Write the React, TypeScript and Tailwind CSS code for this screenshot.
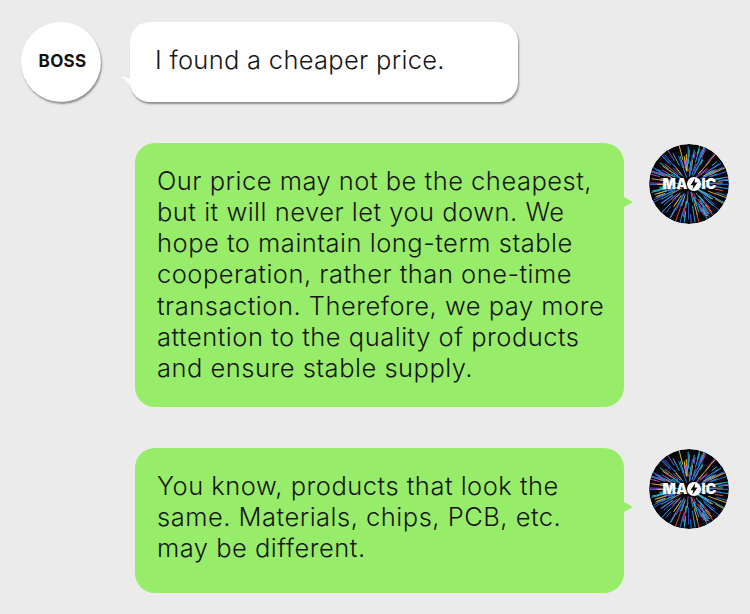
const COLORS = ['#2f7fe8', '#e0389a', '#1fb7d8', '#3a5fe0', '#f0a03a', '#2f9fe8', '#9a4be0', '#23c4c9', '#2f6fe8', '#e8553a', '#2aa8e0', '#d8c03a'];

function rnd(n: number) {
  const x = Math.sin(n * 12.9898) * 43758.5453;
  return x - Math.floor(x);
}

function Burst() {
  const lines = [];
  for (let i = 0; i < 210; i++) {
    const a = rnd(i + 1) * Math.PI * 2;
    const r1 = 7 + rnd(i + 500) * 24;
    const r2 = r1 + 5 + rnd(i + 900) * 12;
    lines.push(
      <line
        key={i}
        x1={40 + r1 * Math.cos(a)}
        y1={40 + r1 * Math.sin(a)}
        x2={40 + r2 * Math.cos(a)}
        y2={40 + r2 * Math.sin(a)}
        stroke={COLORS[Math.floor(rnd(i + 1300) * COLORS.length)]}
        strokeWidth={0.95}
        strokeLinecap="round"
      />
    );
  }
  return (
    <svg viewBox="0 0 80 80" className="absolute inset-0 w-full h-full">
      <circle cx="40" cy="40" r="40" fill="#07070c" />
      {lines}
    </svg>
  );
}

function MagicAvatar() {
  return (
    <div className="relative w-20 h-20 shrink-0 rounded-full overflow-hidden">
      <Burst />
      <div className="absolute inset-0 flex items-center justify-center pl-[1px]">
        <span className="flex items-center text-white font-black text-[14px] leading-none tracking-[0.2px] font-['Inter','Liberation_Sans',sans-serif]">
          MA
          <svg viewBox="0 0 12 12" className="w-[14px] h-[14px]">
            <circle cx="6" cy="6" r="6" fill="#fff" />
            <path d="M7 1 3 7h2.4L4.6 11 9 4.8H6.5z" fill="#07070c" />
          </svg>
          IC
        </span>
      </div>
    </div>
  );
}

function GreenBubble({ lines, className }: { lines: string[]; className: string }) {
  return (
    <div className={`relative w-[489px] bg-[#97ed6a] rounded-[20px] pl-[22px] pt-[22px] ${className}`}>
      {lines.map((l) => (
        <div key={l} className="h-[31.17px] leading-[31.17px] whitespace-nowrap">{l}</div>
      ))}
      <div className="absolute left-full top-[54px] w-0 h-0 border-y-[5px] border-y-transparent border-l-[9px] border-l-[#97ed6a]" />
    </div>
  );
}

export default function App() {
  return (
    <div className="w-[750px] h-[614px] overflow-hidden bg-[#ebebeb] text-[25.5px] tracking-[0.5px] text-[#161616] font-['Inter','Liberation_Sans',sans-serif] font-[350]">
      <div className="flex pt-[22px] pl-[21px] gap-[29px]">
        <div className="w-20 h-20 shrink-0 rounded-full bg-white shadow-[1px_2px_2px_rgba(0,0,0,0.4)] flex items-center justify-center pl-[3px] font-bold text-[17px] tracking-[0.3px] text-[#111]">
          BOSS
        </div>
        <div className="relative w-[388px] h-20 bg-white rounded-[20px] shadow-[1px_2px_2px_rgba(0,0,0,0.4)] pl-[25px] flex items-center pb-[4px] tracking-[0.3px]">
          I found a cheaper price.
          <svg viewBox="0 0 10 10" className="absolute right-full top-[54px] w-[9px] h-[9px]">
            <path d="M0 0 10 3V10Z" fill="#fff" />
          </svg>
        </div>
      </div>
      <div className="flex pt-[41px] pl-[135px] gap-[25px] items-start">
        <GreenBubble
          className="h-[264px]"
          lines={[
            'Our price may not be the cheapest,',
            'but it will never let you down. We',
            'hope to maintain long-term stable',
            'cooperation, rather than one-time',
            'transaction. Therefore, we pay more',
            'attention to the quality of products',
            'and ensure stable supply.',
          ]}
        />
        <div className="pt-px"><MagicAvatar /></div>
      </div>
      <div className="flex pt-[41px] pl-[135px] gap-[25px] items-start">
        <GreenBubble
          className="h-[145px]"
          lines={[
            'You know, products that look the',
            'same. Materials, chips, PCB, etc.',
            'may be different.',
          ]}
        />
        <div className="pt-px"><MagicAvatar /></div>
      </div>
    </div>
  );
}
